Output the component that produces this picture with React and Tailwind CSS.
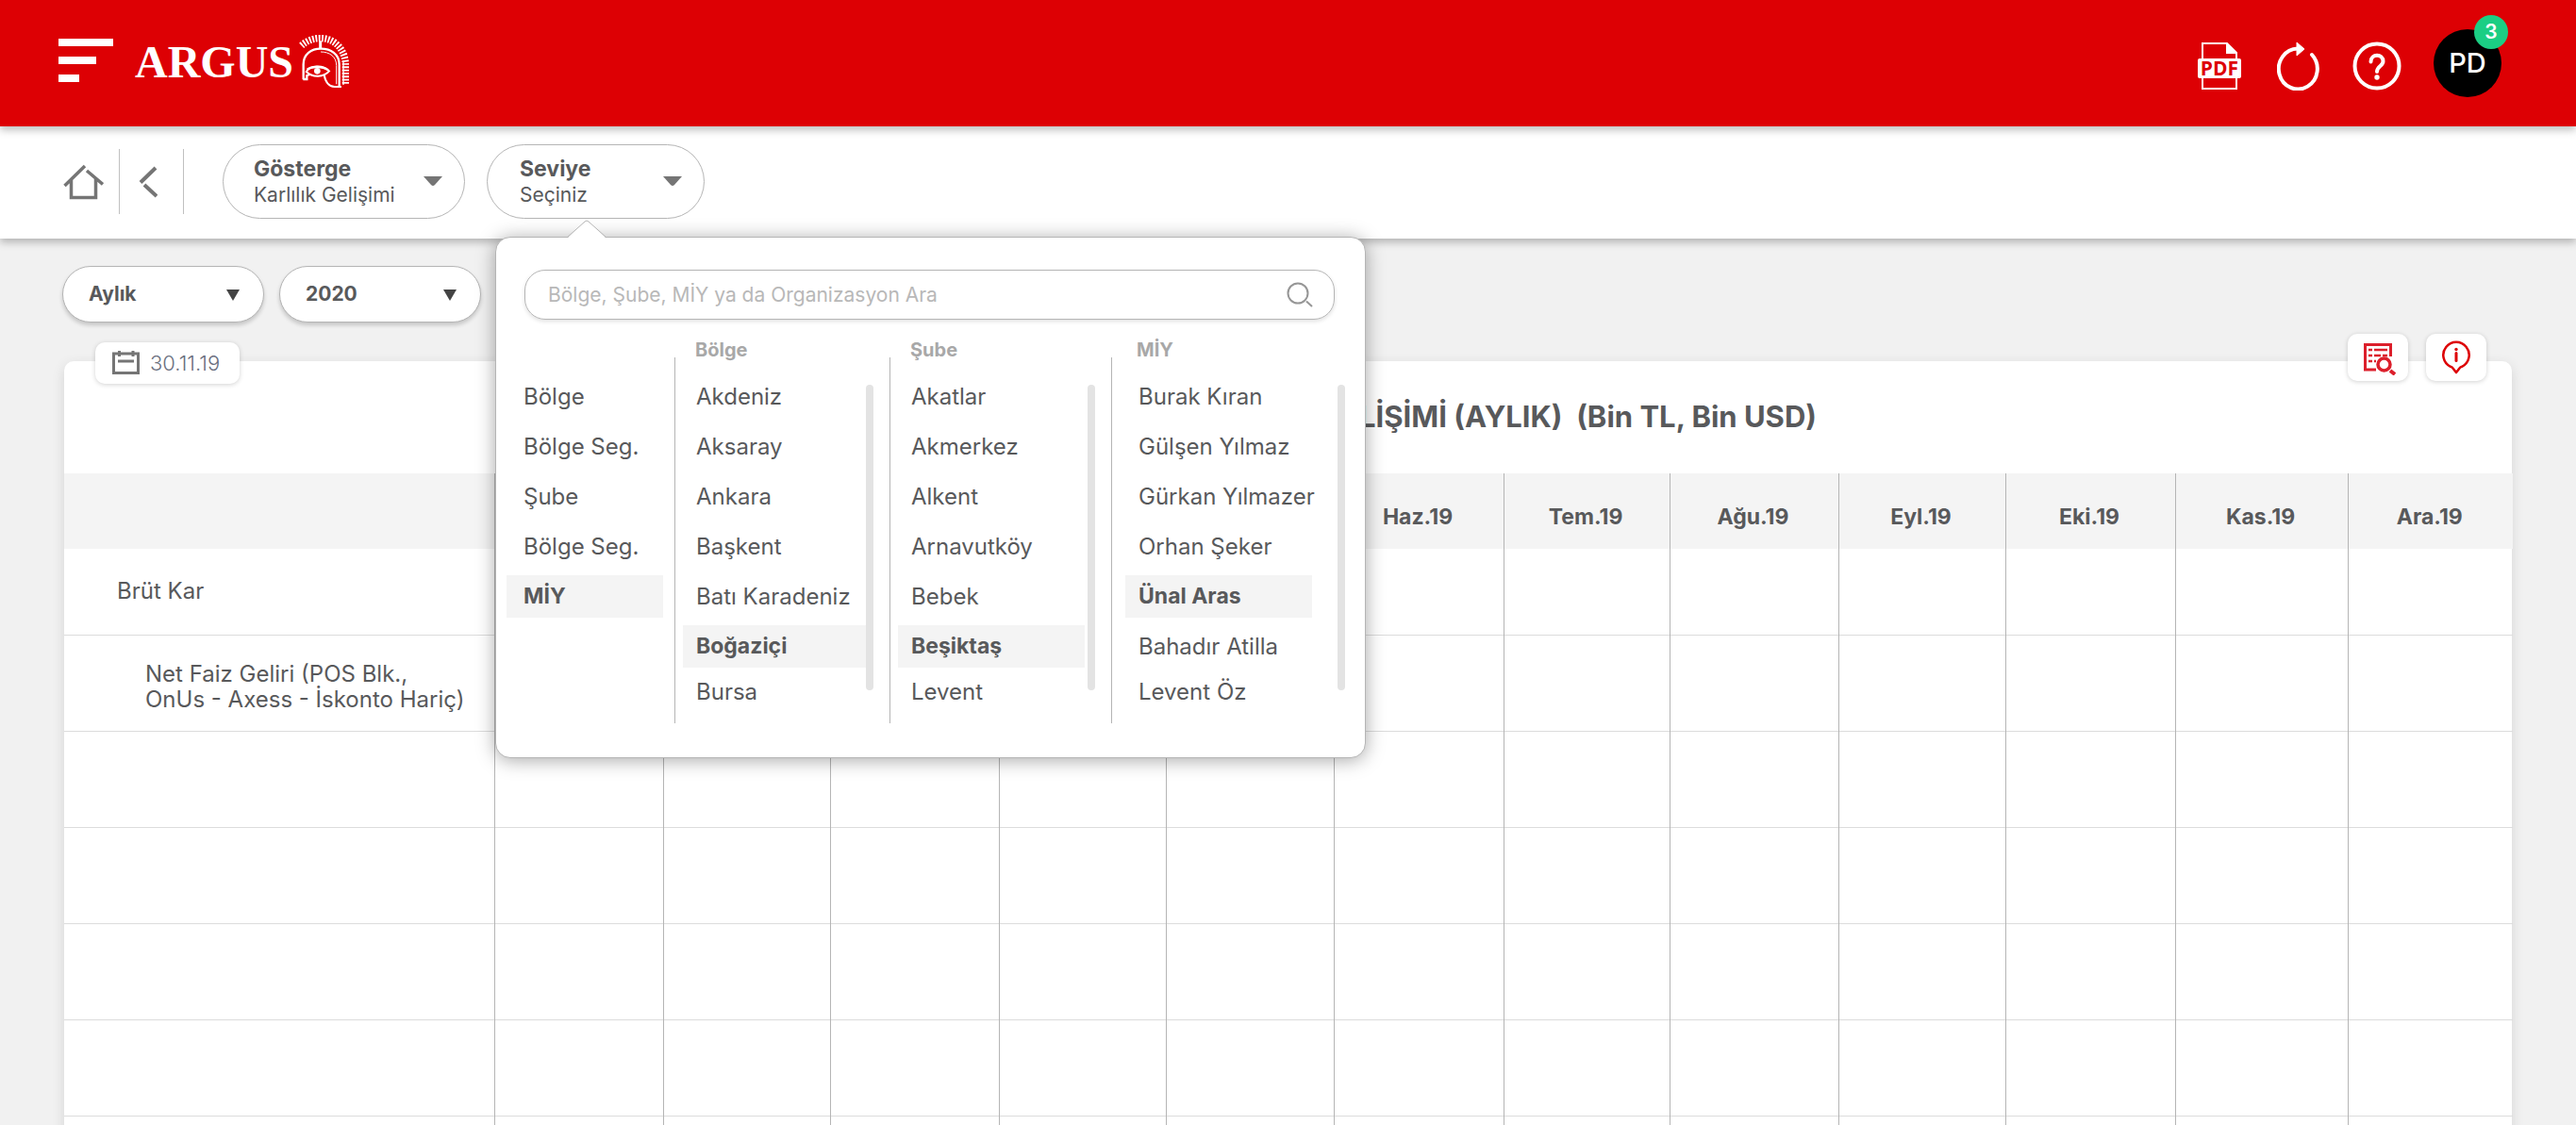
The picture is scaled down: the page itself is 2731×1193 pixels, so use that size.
import React from "react";

const MONTHS = [
  ["Oca.19", "w-[179px]"],
  ["Şub.19", "w-[177px]"],
  ["Mar.19", "w-[179px]"],
  ["Nis.19", "w-[177px]"],
  ["May.19", "w-[178px]"],
  ["Haz.19", "w-[180px]"],
  ["Tem.19", "w-[176px]"],
  ["Ağu.19", "w-[179px]"],
  ["Eyl.19", "w-[177px]"],
  ["Eki.19", "w-[180px]"],
  ["Kas.19", "w-[183px]"],
  ["Ara.19", "w-[175px]"],
];

const LEVELS = ["Bölge", "Bölge Seg.", "Şube", "Bölge Seg.", "MİY"];

const COLUMNS = [
  {
    title: "Bölge",
    selected: "Boğaziçi",
    width: "w-[228px]",
    padding: "pl-[9px] pr-[17px]",
    mark: "mr-0",
    items: ["Akdeniz", "Aksaray", "Ankara", "Başkent", "Batı Karadeniz", "Boğaziçi", "Bursa"],
  },
  {
    title: "Şube",
    selected: "Beşiktaş",
    width: "w-[235px]",
    padding: "pl-[9px] pr-[17px]",
    mark: "mr-[3px]",
    items: ["Akatlar", "Akmerkez", "Alkent", "Arnavutköy", "Bebek", "Beşiktaş", "Levent"],
  },
  {
    title: "MİY",
    selected: "Ünal Aras",
    width: "flex-1",
    padding: "pl-[15px] pr-[10px]",
    mark: "mr-[27px]",
    items: ["Burak Kıran", "Gülşen Yılmaz", "Gürkan Yılmazer", "Orhan Şeker", "Ünal Aras", "Bahadır Atilla", "Levent Öz"],
  },
];

function Helmet() {
  return (
    <svg viewBox="948 108 168 174" className="h-[58px] w-[56px]" fill="none" stroke="white" aria-hidden="true">
      <path d="M959 145 A 84 84 0 0 1 1022 122 A 76 84 0 0 1 1099 205 V 270" strokeWidth="22" strokeDasharray="5.500 4.500" />
      <path d="M1092 192 V 270" strokeWidth="4" />
      <path d="M1019 130 V 156" strokeWidth="9" />
      <path d="M965 253 V 205 C 965 172 990 155 1020 155 C 1052 155 1079 172 1079 205 V 277" strokeWidth="7" />
      <path d="M1070 268 V 208 C 1070 180 1048 165 1020 165" strokeWidth="3" />
      <path d="M964 252 H 976 V 240 L 986 237" strokeWidth="7" />
      <path d="M974 228 C 987 208 1025 204 1047 226 C 1030 246 995 248 974 228 Z" strokeWidth="6" />
      <path d="M977 221 C 990 211 1025 209 1044 223" strokeWidth="7" />
      <circle cx="1009" cy="226" r="10" fill="white" stroke="none" />
      <path d="M1031 238 C 1035 262 1046 275 1064 276 H 1086" strokeWidth="6" />
    </svg>
  );
}

function PdfIcon() {
  return (
    <svg viewBox="0 0 46 52" className="h-[52px] w-[46px]" aria-hidden="true">
      <path d="M5 18 V2 H31 L41 12 V18 M5 38 V50 H41 V38" fill="none" stroke="white" strokeWidth="2" />
      <path d="M30 1 L42 13 H30 Z" fill="white" />
      <rect x="0" y="18" width="46" height="21" rx="2" fill="white" />
      <text x="23" y="36" textAnchor="middle" fontFamily="Open Sans, sans-serif" fontWeight="700" fontSize="21" fill="#dd0004">
        PDF
      </text>
    </svg>
  );
}

function RefreshIcon() {
  return (
    <svg viewBox="0 0 46 52" className="h-[52px] w-[46px]" fill="none" aria-hidden="true">
      <path d="M37 14 A 20.500 21.500 0 1 1 22 7.500" stroke="white" strokeWidth="4" strokeLinecap="round" />
      <path d="M21 1 L29 8 L21 15 Z" fill="white" stroke="white" strokeLinejoin="round" />
    </svg>
  );
}

function HelpIcon() {
  return (
    <svg viewBox="0 0 52 52" className="size-[52px]" fill="none" stroke="white" aria-hidden="true">
      <circle cx="26" cy="26" r="23.500" strokeWidth="4" />
      <path d="M19.500 21.500 C19.500 12.500 32.500 12.500 32.500 21 C32.500 26 26 26 26 32" strokeWidth="4" strokeLinecap="round" />
      <circle cx="26" cy="38" r="2.700" fill="white" stroke="none" />
    </svg>
  );
}

function Caret() {
  return (
    <svg viewBox="0 0 20 11" className="h-[11px] w-[20px]" aria-hidden="true">
      <path d="M0 0 H20 L12 9 Q10 11 8 9 Z" fill="#757575" />
    </svg>
  );
}

function Pill({ title, value, className, open }) {
  return (
    <button
      type="button"
      aria-haspopup="true"
      aria-expanded={open}
      className={"flex h-[79px] items-center justify-between rounded-full border border-[#b5b5b5] bg-white pr-[23px] text-left " + className}
    >
      <span>
        <span className="block text-[23px] leading-[28px] font-bold">{title}</span>
        <span className="block text-[21px] leading-[28px]">{value}</span>
      </span>
      <Caret />
    </button>
  );
}

function Dropdown({ label, options }) {
  return (
    <div className="relative">
      <select
        aria-label={label}
        className="h-[60px] w-[214px] appearance-none rounded-full border border-[#b5b5b5] bg-white pl-[27px] text-[21px] font-bold shadow-[0_3px_4px_rgba(0,0,0,0.18)]"
      >
        {options.map((o) => (
          <option key={o}>{o}</option>
        ))}
      </select>
      <svg viewBox="0 0 14 12" className="pointer-events-none absolute top-[25px] right-[26px] h-[12px] w-[14px]" aria-hidden="true">
        <path d="M0 0 H14 L7 12 Z" fill="#444" />
      </svg>
    </div>
  );
}

function Option({ label, selected, mark, last, indent }) {
  return (
    <li>
      <button
        type="button"
        className={
          "block text-left whitespace-nowrap " +
          indent +
          (last ? " h-[34px]" : " h-[45px]") +
          (selected ? " w-full text-[23px] font-bold" : " text-[24px]")
        }
      >
        {selected ? <span className={"-ml-[14px] flex h-full items-center bg-[#f4f4f4] pl-[14px] " + mark}>{label}</span> : label}
      </button>
    </li>
  );
}

function LevelMenu() {
  return (
    <div
      role="dialog"
      aria-label="Seviye"
      className="absolute top-[98px] left-[9px] z-20 flex w-[923px] flex-col rounded-[16px] border border-[#b5b5b5] bg-white px-[11px] pt-[34px] pb-[36px] shadow-[0_2px_20px_rgba(0,0,0,0.35)]"
    >
      <svg viewBox="0 0 42 20" className="absolute -top-[19px] left-[75px] h-[20px] w-[42px]" aria-hidden="true">
        <path d="M0 20 L1 19 L19 2 Q21 0 23 2 L41 19 L42 20 Z" fill="white" />
        <path d="M0 19 L19 2 Q21 0 23 2 L42 19" fill="none" stroke="#b5b5b5" />
      </svg>

      <label className="mr-[21px] ml-[19px] flex h-[53px] items-center rounded-[22px] border border-[#b5b5b5] pr-[22px] pl-[24px] shadow-[0_2px_4px_rgba(0,0,0,0.12)]">
        <input
          type="search"
          aria-label="Ara"
          placeholder="Bölge, Şube, MİY ya da Organizasyon Ara"
          className="min-w-0 flex-1 bg-transparent text-[21px] outline-none placeholder:text-[#b8b8b8]"
        />
        <svg viewBox="0 0 28 28" className="size-[28px]" fill="none" stroke="#969696" strokeWidth="2" aria-hidden="true">
          <circle cx="12" cy="12" r="10.500" />
          <path d="M21 20.500 L27 26" />
        </svg>
      </label>

      <div className="mt-[14px] flex">
        <div className="w-[178px] pt-[45px] pr-[12px]">
          <ul className="flex flex-col gap-[8px]">
            {LEVELS.map((l, i) => (
              <Option key={i} label={l} selected={l === "MİY"} indent="pl-[18px]" mark="-ml-[18px] pl-[18px]" />
            ))}
          </ul>
        </div>
        {COLUMNS.map((c) => (
          <section key={c.title} className={"relative pt-[45px] " + c.width}>
            <div className="absolute top-[26px] bottom-0 left-0 w-px bg-[#b5b5b5]" />
            <h3 className={"absolute top-[4px] text-[20px] leading-[28px] font-bold text-[#a8a8a8] " + (c.title === "MİY" ? "left-[27px]" : "left-[22px]")}>
              {c.title}
            </h3>
            <div className={"flex " + c.padding}>
              <ul className="flex min-w-0 flex-1 flex-col gap-[8px] pb-[17px]">
                {c.items.map((it, i) => (
                  <Option key={it} label={it} selected={it === c.selected} last={i === 6} indent="pl-[14px]" mark={c.mark} />
                ))}
              </ul>
              <div className="mt-[10px] h-[324px] w-[8px] shrink-0 rounded-full bg-[#e3e3e3]" />
            </div>
          </section>
        ))}
      </div>
    </div>
  );
}

function ReportIcon() {
  return (
    <svg viewBox="0 0 34 34" className="size-[34px]" fill="none" stroke="#dc1f2b" aria-hidden="true">
      <path d="M13 28 H1.500 V1.500 H28.500 V14" strokeWidth="3" />
      <path d="M5 7 H9 M11 7 H25 M5 13 H9 M11 13 H18 M20 13 H25 M5 19 H9 M11 19 H13" strokeWidth="2.500" />
      <circle cx="21.500" cy="22.500" r="6.500" strokeWidth="3.500" fill="white" />
      <path d="M28 29 L33 33" strokeWidth="4" />
    </svg>
  );
}

function InfoIcon() {
  return (
    <svg viewBox="0 0 30 36" className="h-[36px] w-[30px]" fill="none" stroke="#dd0004" aria-hidden="true">
      <path d="M15 34 L11.500 29.500 C11 28.700 10 28.300 9 27.800 A 13.700 13.700 0 1 1 21 27.800 C20 28.300 19 28.700 18.500 29.500 Z" strokeWidth="2.500" strokeLinejoin="round" />
      <path d="M15 13.500 V21.500" strokeWidth="3" strokeLinecap="round" />
      <circle cx="15" cy="9.500" r="1.700" fill="#dd0004" stroke="none" />
    </svg>
  );
}

export default function App() {
  return (
    <div className="flex h-screen flex-col overflow-hidden bg-[#f1f1f1] font-['Inter',sans-serif] text-[#58595b]">
      <header className="relative z-10 flex h-[134px] shrink-0 items-start justify-between bg-[#dd0004] pr-[79px] pl-[62px] shadow-[0_4px_8px_rgba(0,0,0,0.25)]">
        <div className="flex pt-[36px]">
          <button type="button" aria-label="Menü" className="mt-[5px] flex w-[58px] flex-col gap-[11px]">
            <span className="h-[8px] w-[58px] bg-white" />
            <span className="h-[8px] w-[40px] bg-white" />
            <span className="h-[8px] w-[22px] bg-white" />
          </button>
          <a href="#" className="ml-[23px] flex items-start text-white no-underline">
            <span className="font-['Liberation_Serif',serif] text-[48px] leading-[60px] font-bold">ARGUS</span>
            <span className="ml-[5px]">
              <Helmet />
            </span>
          </a>
        </div>
        <div className="flex items-start text-white">
          <button type="button" aria-label="PDF" className="mt-[44px]">
            <PdfIcon />
          </button>
          <button type="button" aria-label="Yenile" className="mt-[44px] ml-[38px]">
            <RefreshIcon />
          </button>
          <button type="button" aria-label="Yardım" className="mt-[44px] ml-[34px]">
            <HelpIcon />
          </button>
          <button type="button" className="relative mt-[31px] ml-[34px] size-[72px] rounded-full bg-black text-[29px] font-medium">
            PD
            <span className="absolute -top-[15px] -right-[7px] flex size-[36px] items-center justify-center rounded-full bg-[#1bce84] text-[21px] font-semibold">
              3
            </span>
          </button>
        </div>
      </header>

      <nav className="relative flex h-[119px] shrink-0 items-start bg-white pt-[19px] pl-[67px] shadow-[0_4px_8px_rgba(0,0,0,0.25)]">
        <div className="mt-[5px] flex h-[69px] items-center border-r border-[#c0c0c0] pr-[16px]">
          <button type="button" aria-label="Ana sayfa">
            <svg viewBox="0 0 43 38" className="h-[38px] w-[43px]" fill="none" stroke="#757575" strokeWidth="3.500" aria-hidden="true">
              <path d="M1.500 23 L23 2 M25 7 L42 21.500 M8.500 17 V35.500 H34.500 V16" />
            </svg>
          </button>
        </div>
        <div className="mt-[5px] flex h-[69px] items-center border-r border-[#c0c0c0] pr-[27px] pl-[20px]">
          <button type="button" aria-label="Geri">
            <svg viewBox="0 0 20 34" className="h-[34px] w-[20px]" fill="none" stroke="#757575" strokeWidth="4" aria-hidden="true">
              <path d="M18 2 L2 17.500 M6 20 L19 32" />
            </svg>
          </button>
        </div>
        <div className="ml-[41px] flex gap-[23px]">
          <Pill title="Gösterge" value="Karlılık Gelişimi" className="w-[257px] pl-[32px]" open={false} />
          <div className="relative">
            <Pill title="Seviye" value="Seçiniz" className="w-[231px] pl-[34px]" open={true} />
            <LevelMenu />
          </div>
        </div>
      </nav>

      <main className="px-[66px] pt-[29px]">
        <div className="flex gap-[16px]">
          <Dropdown label="Dönem" options={["Aylık", "Yıllık"]} />
          <Dropdown label="Yıl" options={["2020", "2019"]} />
        </div>

        <div className="relative mx-[2px] mt-[41px] rounded-t-[10px] bg-white shadow-[0_4px_14px_rgba(0,0,0,0.12)]">
          <button
            type="button"
            className="absolute -top-[20px] left-[33px] flex h-[44px] items-center gap-[11px] rounded-[10px] bg-white pr-[21px] pl-[18px] text-[22px] font-light text-[#6b7080] shadow-[0_1px_5px_rgba(0,0,0,0.18)]"
          >
            <svg viewBox="0 0 29 26" className="h-[26px] w-[29px]" fill="none" stroke="#757575" strokeWidth="3" aria-hidden="true">
              <path d="M1.500 3 H27.500 V23.500 H1.500 Z M6 11 H23 M7.500 0 V6 M22 0 V6" />
            </svg>
            30.11.19
          </button>
          <div className="absolute -top-[29px] right-[27px] flex gap-[19px]">
            <button type="button" aria-label="Rapor detayı" className="flex h-[50px] w-[64px] items-center justify-center rounded-[10px] bg-white pt-[4px] pl-[4px] shadow-[0_1px_5px_rgba(0,0,0,0.18)]">
              <ReportIcon />
            </button>
            <button type="button" aria-label="Bilgi" className="flex h-[50px] w-[64px] items-center justify-center rounded-[10px] bg-white shadow-[0_1px_5px_rgba(0,0,0,0.18)]">
              <InfoIcon />
            </button>
          </div>

          <h1 className="flex h-[119px] items-center justify-end pr-[737px] text-[31px] font-bold whitespace-pre">
            {"KARLILIK GELİŞİMİ (AYLIK)  (Bin TL, Bin USD)"}
          </h1>

          <table className="w-full table-fixed border-collapse">
            <colgroup>
              <col className="w-[456px]" />
              {MONTHS.map(([m, w]) => (
                <col key={m} className={w} />
              ))}
            </colgroup>
            <thead>
              <tr className="h-[80px] bg-[#f4f4f4]">
                <th />
                {MONTHS.map(([m]) => (
                  <th key={m} scope="col" className="border-l border-[#b5b5b5] pt-[12px] pr-[2px] text-[23px] font-bold">
                    {m}
                  </th>
                ))}
              </tr>
            </thead>
            <tbody>
              <tr className="h-[91px]">
                <th scope="row" className="pl-[56px] text-left text-[24px] font-normal">
                  Brüt Kar
                </th>
                {MONTHS.map(([m]) => (
                  <td key={m} className="border-l border-[#b5b5b5]" />
                ))}
              </tr>
              <tr className="h-[102px] border-t border-[#dcdcdc]">
                <th scope="row" className="pt-[8px] pl-[86px] text-left text-[24px] leading-[27px] font-normal whitespace-nowrap">
                  Net Faiz Geliri (POS Blk.,
                  <br />
                  OnUs - Axess - İskonto Hariç)
                </th>
                {MONTHS.map(([m]) => (
                  <td key={m} className="border-l border-[#b5b5b5]" />
                ))}
              </tr>
              {[0, 1, 2, 3, 4].map((r) => (
                <tr key={r} className="h-[102px] border-t border-[#dcdcdc]">
                  <th />
                  {MONTHS.map(([m]) => (
                    <td key={m} className="border-l border-[#b5b5b5]" />
                  ))}
                </tr>
              ))}
            </tbody>
          </table>
        </div>
      </main>
    </div>
  );
}
